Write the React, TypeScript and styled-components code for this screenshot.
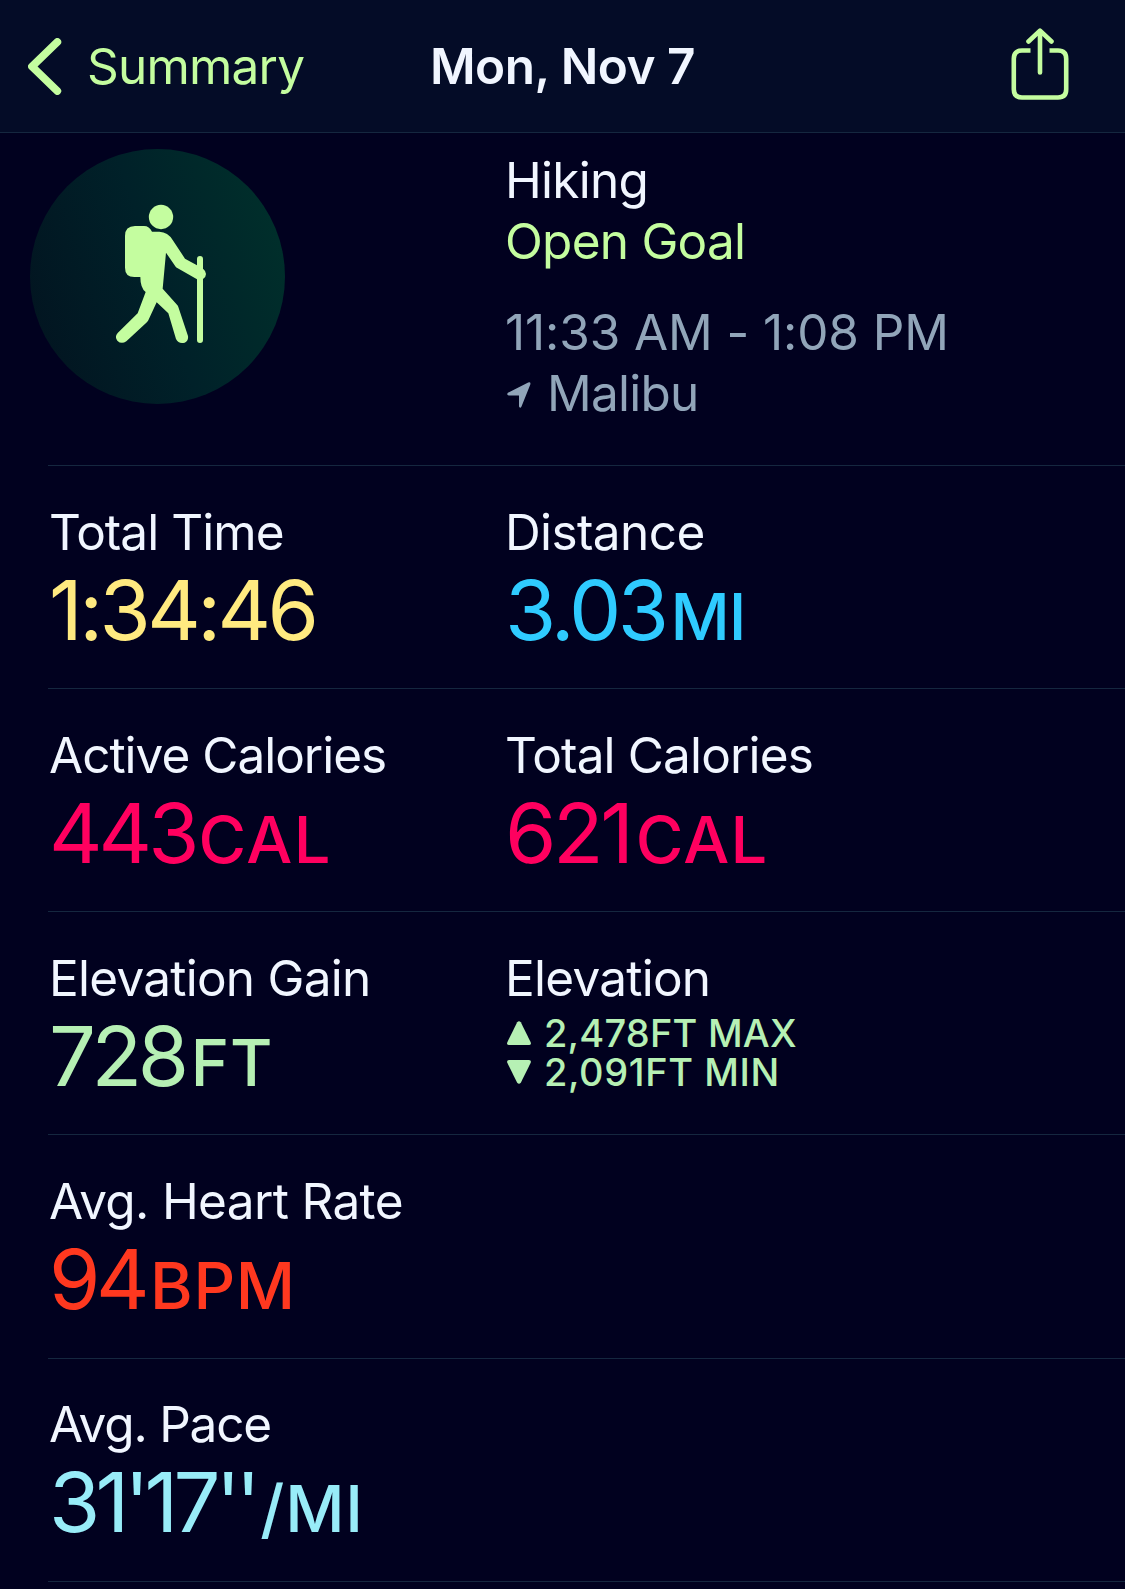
import React from 'react';
import styled, { createGlobalStyle } from 'styled-components';

const colors = {
  background: '#01011f',
  header: '#040c27',
  line: '#15273f',
  text: '#f1f6ff',
  muted: '#91a5b9',
  accent: '#c4fd9f',
  time: '#ffea80',
  distance: '#2fcbff',
  calories: '#ff005f',
  elevation: '#b6f0b4',
  heart: '#ff381f',
  pace: '#98ecf8'
};

interface Metric {
  label: string;
  labelSpacing?: number;
  value: string;
  valueSpacing?: number;
  unit?: string;
  unitSpacing?: number;
  unitGap?: number;
  color: string;
}

interface ElevationRange {
  label: string;
  max: string;
  min: string;
}

interface MetricRow {
  id: string;
  metrics: Metric[];
  range?: ElevationRange;
}

const rows: MetricRow[] = [
  {
    id: 'time',
    metrics: [
      { label: 'Total Time', labelSpacing: -0.95, value: '1:34:46', valueSpacing: -3.6, color: colors.time },
      { label: 'Distance', labelSpacing: -0.6, value: '3.03', valueSpacing: -3.6, unit: 'MI', unitSpacing: -1, unitGap: 5, color: colors.distance }
    ]
  },
  {
    id: 'calories',
    metrics: [
      { label: 'Active Calories', labelSpacing: -1, value: '443', valueSpacing: -4, unit: 'CAL', unitSpacing: 1.5, unitGap: 3, color: colors.calories },
      { label: 'Total Calories', labelSpacing: -0.85, value: '621', valueSpacing: -3.4, unit: 'CAL', unitSpacing: 1.3, unitGap: 5, color: colors.calories }
    ]
  },
  {
    id: 'elevation',
    metrics: [
      { label: 'Elevation Gain', value: '728', valueSpacing: -4.4, unit: 'FT', unitSpacing: 1, unitGap: 6, color: colors.elevation }
    ],
    range: { label: 'Elevation', max: '2,478FT MAX', min: '2,091FT MIN' }
  },
  {
    id: 'heart',
    metrics: [
      { label: 'Avg. Heart Rate', labelSpacing: -0.65, value: '94', valueSpacing: -4.5, unit: 'BPM', unitSpacing: 0.6, unitGap: 5, color: colors.heart }
    ]
  },
  {
    id: 'pace',
    metrics: [
      { label: 'Avg. Pace', labelSpacing: -1.2, value: "31'17''", valueSpacing: -4.8, unit: '/MI', unitSpacing: 0.8, unitGap: 4.5, color: colors.pace }
    ]
  }
];

function BackIcon() {
  return (
    <svg width="34" height="57" viewBox="0 0 34 57" fill="none">
      <path d="M29.3 4 L4 28.5 L29.3 53" stroke="currentColor" strokeWidth="7.8" strokeLinecap="round" strokeLinejoin="round" />
    </svg>
  );
}

function ShareIcon() {
  return (
    <svg width="58" height="72" viewBox="0 0 58 72" fill="none" stroke="currentColor" strokeWidth="4.6">
      <path d="M19.5 22.5 H11 Q2.8 22.5 2.8 30.7 V61.3 Q2.8 69.5 11 69.5 H47 Q55.2 69.5 55.2 61.3 V30.7 Q55.2 22.5 47 22.5 H38.5" />
      <path d="M29 3 V44.5 M17.5 13.5 L29 2.6 L40.5 13.5" strokeLinecap="round" strokeLinejoin="round" />
    </svg>
  );
}

function HikerIcon() {
  return (
    <svg width="255" height="255" viewBox="0 0 765 765" fill="currentColor">
      <circle cx="393" cy="204" r="36.5" />
      <path d="M315 231 H342 Q358 231 366 248 L388 248 Q414 249 428 273 L465 329 L501 349 V330 Q501 321 510 321 Q519 321 519 330 V359 Q528 366 528 375 Q528 384 519 390 V573 Q519 582 510 582 Q501 582 501 573 V391 L438 355 L408 311 L398 419 L441 467 Q444 470 445 474 L474 561 Q476 575 464 581 Q446 586 438 570 L415 493 L380 460 L355 514 Q353 518 349 521 L289 577 Q274 587 262 575 Q253 563 263 552 L323 493 L347 429 Q331 417 331 384 H313 Q285 384 285 356 V261 Q285 231 315 231 Z" />
    </svg>
  );
}

function LocationIcon() {
  return (
    <svg width="24" height="26" viewBox="0 0 24 26" fill="currentColor">
      <path d="M21.2 0.5 Q24 -0.3 23.3 2.6 L14.5 24.5 Q13.7 26 12.8 25.6 Q12 25.4 12 24 V13.5 H1.8 Q-0.8 12.8 0.9 10.7 Z" />
    </svg>
  );
}

function TriangleIcon() {
  return (
    <svg width="24" height="24" viewBox="0 0 24 24" fill="currentColor">
      <path d="M10.2 1.2 Q12 -0.8 13.8 1.2 L23.7 21.2 Q24.5 24 22 24 H2 Q-0.5 24 0.3 21.2 Z" />
    </svg>
  );
}

export default function App() {
  return (
    <>
      <GlobalStyle />
      <Screen>
        <Header>
          <BackButton type="button">
            <BackIcon />
            <span>Summary</span>
          </BackButton>
          <Title>Mon, Nov 7</Title>
          <ShareButton type="button" aria-label="Share">
            <ShareIcon />
          </ShareButton>
        </Header>

        <Overview>
          <Badge>
            <HikerIcon />
          </Badge>
          <Details>
            <DetailLine $color={colors.text}>Hiking</DetailLine>
            <DetailLine $color={colors.accent}>Open Goal</DetailLine>
            <TimeLine $color={colors.muted}>11:33 AM - 1:08 PM</TimeLine>
            <DetailLine $color={colors.muted}>
              <LocationIcon />
              Malibu
            </DetailLine>
          </Details>
        </Overview>

        <Metrics>
          {rows.map((row) => (
            <Row key={row.id}>
              {row.metrics.map((metric) => (
                <Cell key={metric.label}>
                  <Label $spacing={metric.labelSpacing}>{metric.label}</Label>
                  <Value $color={metric.color} $spacing={metric.valueSpacing}>
                    {metric.value}
                    {metric.unit && (
                      <Unit $spacing={metric.unitSpacing} $gap={metric.unitGap}>
                        {metric.unit}
                      </Unit>
                    )}
                  </Value>
                </Cell>
              ))}
              {row.range && (
                <Cell>
                  <Label>{row.range.label}</Label>
                  <RangeList>
                    <RangeLine>
                      <TriangleIcon />
                      {row.range.max}
                    </RangeLine>
                    <RangeLine $down>
                      <TriangleIcon />
                      {row.range.min}
                    </RangeLine>
                  </RangeList>
                </Cell>
              )}
            </Row>
          ))}
        </Metrics>
      </Screen>
    </>
  );
}

const GlobalStyle = createGlobalStyle`
  * {
    box-sizing: border-box;
  }

  body {
    margin: 0;
    background: ${colors.background};
    font-family: Inter, 'Liberation Sans', sans-serif;
  }

  svg {
    display: block;
    flex-shrink: 0;
  }
`;

const Screen = styled.main`
  height: 1589px;
  overflow: hidden;
  background: ${colors.background};
  color: ${colors.text};
  white-space: nowrap;
`;

const Header = styled.header`
  display: grid;
  grid-template-columns: 1fr auto 1fr;
  align-items: center;
  height: 133px;
  padding: 0 28px;
  background: ${colors.header};
  border-bottom: 1px solid ${colors.line};
`;

const BackButton = styled.button`
  display: flex;
  align-items: center;
  gap: 25px;
  padding: 0;
  border: none;
  background: none;
  color: ${colors.accent};
  font: inherit;
  font-size: 49.5px;
  line-height: 60px;
  letter-spacing: -0.8px;
`;

const Title = styled.h1`
  margin: 0;
  font-size: 49.5px;
  line-height: 60px;
  font-weight: 600;
  letter-spacing: -0.5px;
`;

const ShareButton = styled.button`
  justify-self: end;
  margin-right: 28px;
  padding: 0 0 4px;
  border: none;
  background: none;
  color: ${colors.accent};
`;

const Overview = styled.section`
  display: grid;
  grid-template-columns: 474px 1fr;
  align-items: start;
  height: 332px;
  padding: 16px 0 0 30px;
`;

const Badge = styled.div`
  width: 255px;
  height: 255px;
  border-radius: 50%;
  background: linear-gradient(72deg, #021420 5%, #002129 50%, #00302b 95%);
  color: ${colors.accent};
`;

const Details = styled.div`
  display: flex;
  flex-direction: column;
  padding: 1px 0 0 1px;
`;

const DetailLine = styled.div<{ $color: string }>`
  display: flex;
  align-items: center;
  color: ${props => props.$color};
  font-size: 49.5px;
  line-height: 61px;
  letter-spacing: -0.75px;

  svg {
    margin: 3px 16px 0 2px;
  }
`;

const TimeLine = styled(DetailLine)`
  margin-top: 30px;
  letter-spacing: -0.1px;
`;

const Metrics = styled.section`
  padding-left: 48px;
`;

const Row = styled.div`
  display: grid;
  grid-template-columns: 456px 1fr;
  height: 223px;
  padding-top: 36px;
  border-top: 1px solid ${colors.line};

  &:nth-last-child(2) {
    height: 224px;
  }

  &:last-child {
    height: 224px;
    padding-top: 35px;
    border-bottom: 1px solid ${colors.line};
  }
`;

const Cell = styled.div`
  min-width: 0;
`;

const Label = styled.div<{ $spacing?: number }>`
  padding-left: 1px;
  font-size: 49.5px;
  line-height: 61px;
  letter-spacing: ${props => props.$spacing ?? -0.75}px;
`;

const Value = styled.div<{ $color: string; $spacing?: number }>`
  padding: 2px 0 0 1px;
  color: ${props => props.$color};
  font-size: 83px;
  line-height: 90px;
  letter-spacing: ${props => props.$spacing ?? -3}px;
`;

const Unit = styled.span<{ $spacing?: number; $gap?: number }>`
  margin-left: ${props => props.$gap ?? 0}px;
  font-size: 65px;
  font-weight: 500;
  letter-spacing: ${props => props.$spacing ?? 0}px;
`;

const RangeList = styled.div`
  display: flex;
  flex-direction: column;
  padding-top: 5px;
`;

const RangeLine = styled.div<{ $down?: boolean }>`
  display: flex;
  align-items: center;
  gap: 13px;
  padding-left: 3px;
  color: ${colors.elevation};
  font-size: 38px;
  font-weight: 500;
  line-height: 39px;
  letter-spacing: ${props => props.$down ? 0.6 : 0.2}px;

  svg {
    margin-top: -1px;
    transform: ${props => props.$down ? 'rotate(180deg)' : 'none'};
  }
`;
